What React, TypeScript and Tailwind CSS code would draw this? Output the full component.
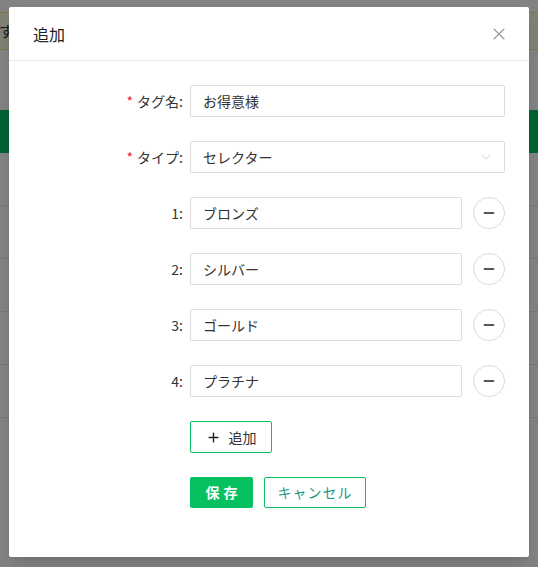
import { X, ChevronDown, Minus, Plus } from 'lucide-react'

const jp = { fontFamily: '"Noto Sans CJK JP", "Noto Sans", sans-serif' }

const options = ['ブロンズ', 'シルバー', 'ゴールド', 'プラチナ']

function Label({ text, required }: { text: string; required?: boolean }) {
  return (
    <div className="w-[157px] shrink-0 pr-[7px] text-right text-[14px] text-[#333]">
      {required && <span className="mr-1 text-[#f5222d]">*</span>}
      {text}:
    </div>
  )
}

export default function App() {
  return (
    <div className="relative h-[567px] w-[538px] overflow-hidden bg-white" style={jp}>
      {/* 後ろのページ */}
      <div className="pt-[12px]">
        <div className="flex h-[38px] items-center border-y border-[#ffe58f] bg-[#fffbe6] text-[15px] text-[#333]">
          <span className="-ml-[1px]">す</span>
        </div>
        <div className="mt-[60px] h-[43px] bg-[#07c160]" />
        {[0, 1, 2, 3, 4].map(i => (
          <div key={i} className="h-[53px] border-b border-[#e5e5e5]" />
        ))}
      </div>

      {/* オーバーレイ */}
      <div className="absolute inset-0 flex items-start justify-center bg-black/[0.49] pt-[7px]">
        <div className="flex h-[550px] w-[520px] flex-col rounded-[2px] bg-white shadow-lg">
          <div className="flex h-[54px] items-center justify-between border-b border-[#ebebeb] px-[24px]">
            <span className="text-[16px] text-[#222]">追加</span>
            <X className="-mr-[4px] h-[20px] w-[20px] text-[#999]" strokeWidth={1.3} />
          </div>

          <div className="flex flex-col gap-[24px] px-[24px] pt-[24px]">
            <div className="flex items-center">
              <Label text="タグ名" required />
              <div className="flex h-[32px] flex-1 items-center rounded-[2px] border border-[#dcdcdc] px-[12px] text-[14px] text-[#333]">
                お得意様
              </div>
            </div>
            <div className="flex items-center">
              <Label text="タイプ" required />
              <div className="flex h-[32px] flex-1 items-center justify-between rounded-[2px] border border-[#dcdcdc] pl-[12px] pr-[9px] text-[14px] text-[#333]">
                <span>セレクター</span>
                <ChevronDown className="h-[18px] w-[18px] text-[#c8c8c8]" strokeWidth={1.1} />
              </div>
            </div>
            {options.map((o, i) => (
              <div key={o} className="flex items-center">
                <Label text={String(i + 1)} />
                <div className="flex h-[32px] flex-1 items-center rounded-[2px] border border-[#dcdcdc] px-[12px] text-[14px] text-[#333]">
                  {o}
                </div>
                <div className="ml-[11px] flex h-[32px] w-[32px] items-center justify-center rounded-full border border-[#dcdcdc]">
                  <Minus className="h-[16px] w-[16px] text-[#222]" strokeWidth={2.2} />
                </div>
              </div>
            ))}
            <div className="flex items-center pl-[157px]">
              <div className="flex h-[32px] w-[82px] items-center justify-center gap-[8px] rounded-[2px] border border-[#07c160] text-[14px] text-[#333]">
                <Plus className="h-[15px] w-[15px] text-[#222]" strokeWidth={2.2} />
                <span>追加</span>
              </div>
            </div>
            <div className="flex items-center gap-[11px] pl-[157px]">
              <div className="flex h-[31px] w-[63px] items-center justify-center rounded-[2px] bg-[#07c160] text-[14px] font-bold tracking-[4px] text-white">
                <span className="pl-[4px]">保存</span>
              </div>
              <div className="flex h-[31px] w-[102px] items-center justify-center rounded-[2px] border border-[#07c160] text-[14px] tracking-[1px] text-[#1a9a86]">
                キャンセル
              </div>
            </div>
          </div>
        </div>
      </div>
    </div>
  )
}
